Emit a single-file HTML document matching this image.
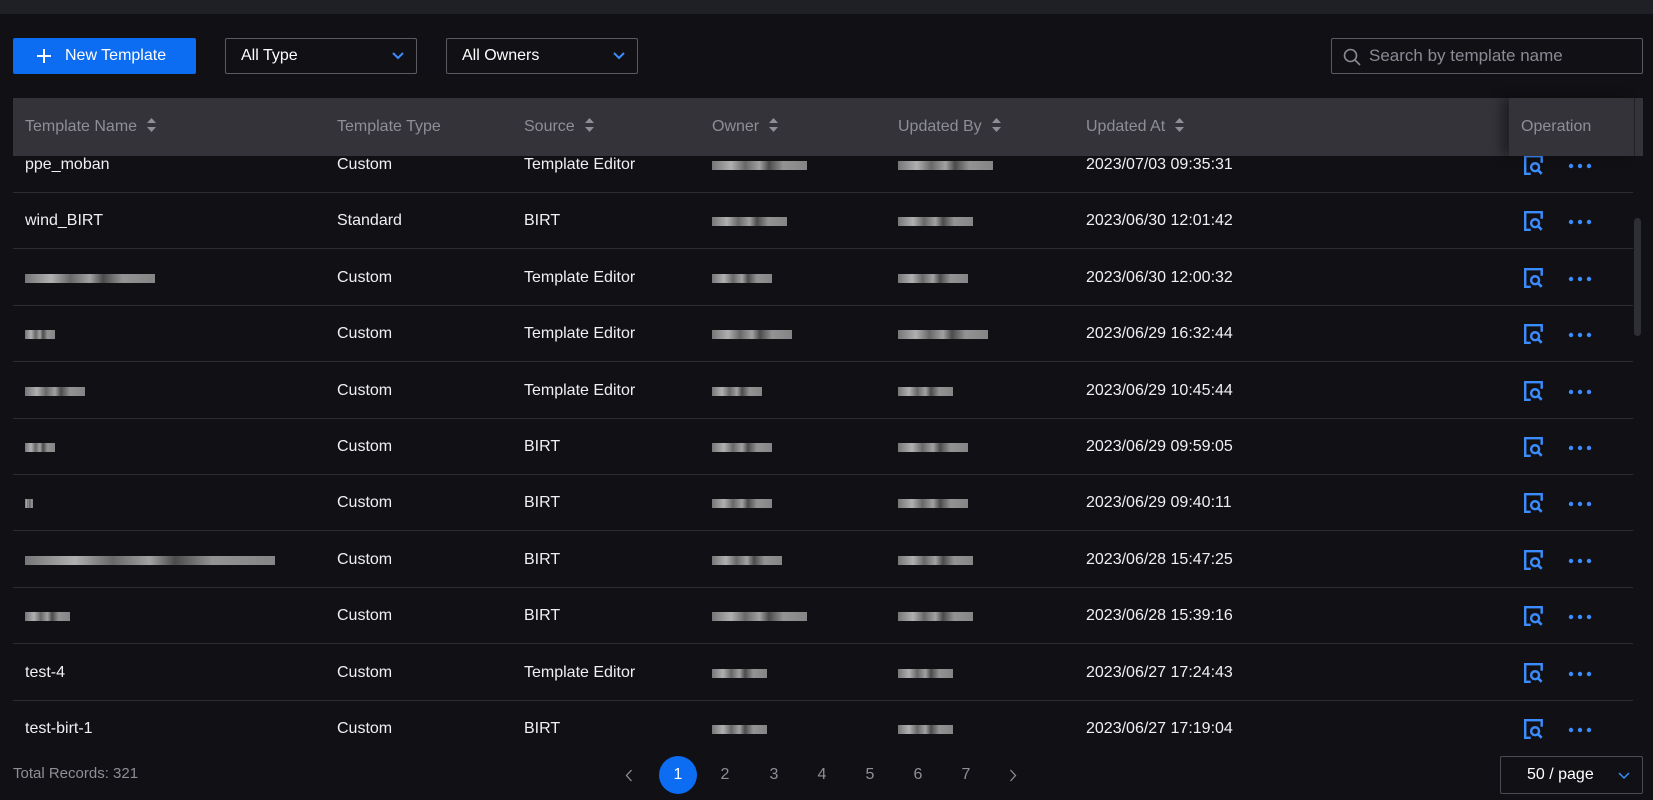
<!DOCTYPE html>
<html><head><meta charset="utf-8"><style>
*{box-sizing:border-box;margin:0;padding:0}
body{width:1653px;height:800px;background:#111115;font-family:"Liberation Sans",sans-serif;color:#e8e8ea;position:relative;overflow:hidden;font-size:16px}
.topbar{position:absolute;left:0;top:0;width:1653px;height:14px;background:#1f1f26}
.btn{position:absolute;left:13px;top:38px;width:183px;height:36px;background:#0c6cf2;border-radius:2px;color:#fff;font-size:16px;line-height:36px;padding-left:52px}
.btn .p{position:absolute;left:24px;top:11px;width:14px;height:14px}
.sel{position:absolute;top:38px;height:36px;border:1px solid #5a5a62;border-radius:2px;font-size:16px;line-height:34px;padding-left:15px;color:#fff}
.sel svg{position:absolute;right:12px;top:13px}
.search{position:absolute;left:1331px;top:38px;width:312px;height:36px;border:1px solid #5a5a62;border-radius:2px;color:#8a8a94;font-size:17px;line-height:34px;padding-left:37px}
.search svg{position:absolute;left:11px;top:9px}
.head{position:absolute;left:13px;top:98px;width:1630px;height:58px;background:#333339;color:#8e8e96;font-size:16px}
.head span{position:absolute;top:20px}
.opcol{position:absolute;left:1509px;top:98px;width:125px;height:58px;background:#333339;box-shadow:-8px 0 10px rgba(0,0,0,.35)}
.sort{display:inline-block;vertical-align:middle;margin-left:10px;width:9px;height:16px;position:relative;top:-2px}
.row{position:absolute;left:13px;width:1620px;height:56px;border-bottom:1px solid #2c2c33}
.row.last{border-bottom:none}
.row span{position:absolute;top:19px;color:#f0f0f2}
.blur{display:inline-block;height:9px;background:linear-gradient(90deg,#888 0,#ccc 20%,#777 35%,#bbb 50%,#555 60%,#aaa 75%,#999 100%);opacity:.85}
.icon{position:absolute;left:1510px}
.dots{position:absolute;left:1555px}
.pg{position:absolute;top:756px;height:38px;line-height:38px;font-size:16px;color:#8e8e96;width:38px;text-align:center}
.pg svg{margin-top:13px}
</style></head><body>
<div class="topbar"></div>
<div class="btn"><svg class="p" viewBox="0 0 14 14"><path d="M7 0v14M0 7h14" stroke="#fff" stroke-width="2"/></svg>New Template</div>
<div class="sel" style="left:225px;width:192px">All Type<svg width="12" height="8" viewBox="0 0 12 8"><path d="M1 1l5 5 5-5" stroke="#3b8cff" stroke-width="2" fill="none"/></svg></div>
<div class="sel" style="left:446px;width:192px">All Owners<svg width="12" height="8" viewBox="0 0 12 8"><path d="M1 1l5 5 5-5" stroke="#3b8cff" stroke-width="2" fill="none"/></svg></div>
<div class="search"><svg width="18" height="18" viewBox="0 0 18 18"><circle cx="7.5" cy="7.5" r="6" stroke="#8a8a94" stroke-width="1.6" fill="none"/><path d="M12 12l5 5" stroke="#8a8a94" stroke-width="1.6"/></svg>Search by template name</div>

<div id="rows"></div>
<div class="head">
<span style="left:12px">Template Name<svg class="sort" viewBox="0 0 9 16"><path d="M0 6L4.5 1 9 6zM0 10l4.5 5L9 10z" fill="#8e8e96"/></svg></span>
<span style="left:324px">Template Type</span>
<span style="left:511px">Source<svg class="sort" viewBox="0 0 9 16"><path d="M0 6L4.5 1 9 6zM0 10l4.5 5L9 10z" fill="#8e8e96"/></svg></span>
<span style="left:699px">Owner<svg class="sort" viewBox="0 0 9 16"><path d="M0 6L4.5 1 9 6zM0 10l4.5 5L9 10z" fill="#8e8e96"/></svg></span>
<span style="left:885px">Updated By<svg class="sort" viewBox="0 0 9 16"><path d="M0 6L4.5 1 9 6zM0 10l4.5 5L9 10z" fill="#8e8e96"/></svg></span>
<span style="left:1073px">Updated At<svg class="sort" viewBox="0 0 9 16"><path d="M0 6L4.5 1 9 6zM0 10l4.5 5L9 10z" fill="#8e8e96"/></svg></span>
</div>
<div class="opcol"><span style="position:absolute;left:12px;top:20px;color:#8e8e96">Operation</span></div>
<div style="position:absolute;left:1634px;top:98px;width:9px;height:58px;background:#333339;border-left:1px solid #222"></div>
<div style="position:absolute;left:1634px;top:218px;width:7px;height:118px;background:#2e2e35;border-radius:4px"></div>

<div style="position:absolute;left:13px;top:766px;font-size:15px;color:#8e8e96;line-height:1">Total Records: 321</div>
<div class="pg" style="left:610px"><svg width="8" height="13" viewBox="0 0 8 13"><path d="M6.5 1L1.5 6.5l5 5.5" stroke="#8e8e96" stroke-width="1.3" fill="none"/></svg></div>
<div class="pg" style="left:659px;background:#0c6cf2;border-radius:50%;color:#fff">1</div>
<div class="pg" style="left:706px">2</div>
<div class="pg" style="left:755px">3</div>
<div class="pg" style="left:803px">4</div>
<div class="pg" style="left:851px">5</div>
<div class="pg" style="left:899px">6</div>
<div class="pg" style="left:947px">7</div>
<div class="pg" style="left:994px"><svg width="8" height="13" viewBox="0 0 8 13"><path d="M1.5 1l5 5.5-5 5.5" stroke="#8e8e96" stroke-width="1.3" fill="none"/></svg></div>
<div style="position:absolute;left:1500px;top:756px;width:143px;height:38px;border:1px solid #4a4a52;border-radius:2px;line-height:36px;padding-left:26px;color:#fff;font-size:16px">50 / page<svg style="position:absolute;right:12px;top:15px" width="12" height="8" viewBox="0 0 12 8"><path d="M1 1l5 5 5-5" stroke="#3b8cff" stroke-width="1.5" fill="none"/></svg></div>

<script>
var d=[["ppe_moban","Custom","Template Editor",0,95,95,"2023/07/03 09:35:31"],
["wind_BIRT","Standard","BIRT",0,75,75,"2023/06/30 12:01:42"],
[130,"Custom","Template Editor",0,60,70,"2023/06/30 12:00:32"],
[30,"Custom","Template Editor",0,80,90,"2023/06/29 16:32:44"],
[60,"Custom","Template Editor",0,50,55,"2023/06/29 10:45:44"],
[30,"Custom","BIRT",0,60,70,"2023/06/29 09:59:05"],
[8,"Custom","BIRT",0,60,70,"2023/06/29 09:40:11"],
[250,"Custom","BIRT",0,70,75,"2023/06/28 15:47:25"],
[45,"Custom","BIRT",0,95,75,"2023/06/28 15:39:16"],
["test-4","Custom","Template Editor",0,55,55,"2023/06/27 17:24:43"],
["test-birt-1","Custom","BIRT",0,55,55,"2023/06/27 17:19:04"]];
var h="",y0=137;
d.forEach(function(r,i){var y=y0+i*56.4;
var n=typeof r[0]=="number"?'<i class="blur" style="width:'+r[0]+'px;margin-top:5px"></i>':r[0];
h+='<div class="row'+(i==d.length-1?' last':'')+'" style="top:'+y+'px"><span style="left:12px">'+n+'</span><span style="left:324px">'+r[1]+'</span><span style="left:511px">'+r[2]+'</span><span style="left:699px"><i class="blur" style="width:'+r[4]+'px;margin-top:5px"></i></span><span style="left:885px"><i class="blur" style="width:'+r[5]+'px;margin-top:5px"></i></span><span style="left:1073px">'+r[6]+'</span>'+
'<svg class="icon" style="top:17px" width="22" height="22" viewBox="0 0 20 20"><path d="M7 2H2v16h5M7 2h10v6" stroke="#3b8cff" stroke-width="2.2" fill="none"/><circle cx="11" cy="12" r="3.6" stroke="#3b8cff" stroke-width="2.2" fill="none"/><path d="M13.5 14.5l3.5 3.5" stroke="#3b8cff" stroke-width="2.4"/></svg>'+
'<svg class="dots" style="top:26px" width="24" height="6" viewBox="0 0 24 6"><circle cx="3" cy="3" r="2.2" fill="#3b8cff"/><circle cx="12" cy="3" r="2.2" fill="#3b8cff"/><circle cx="21" cy="3" r="2.2" fill="#3b8cff"/></svg></div>';});
document.getElementById("rows").innerHTML=h;
</script>
</body></html>
